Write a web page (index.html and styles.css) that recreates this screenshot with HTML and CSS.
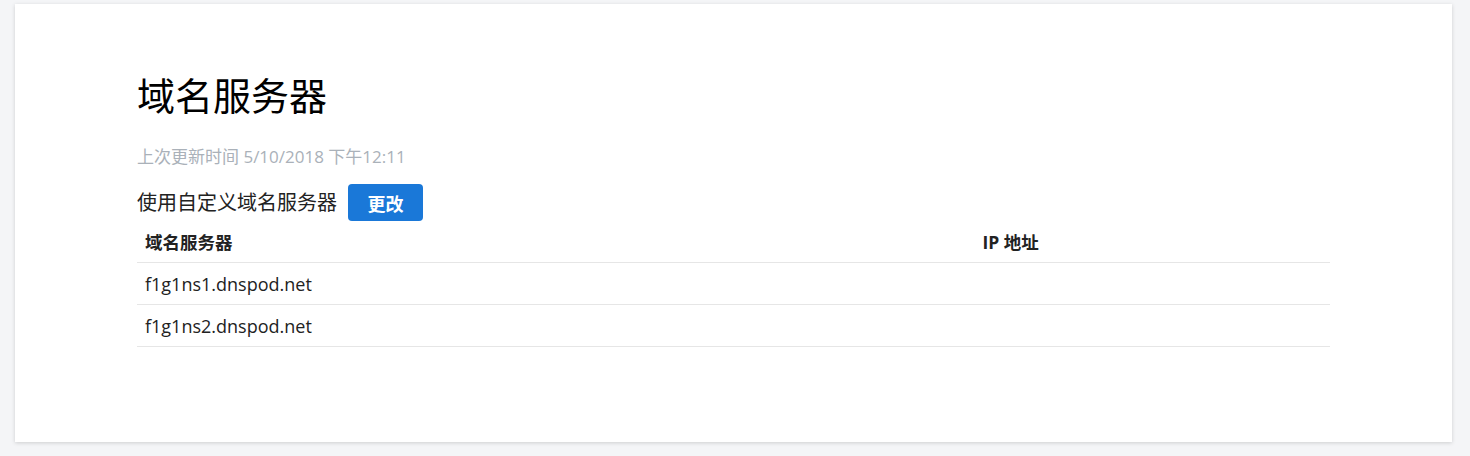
FILE: index.html
```html
<!DOCTYPE html>
<html lang="zh-CN">
<head>
<meta charset="utf-8">
<title>域名服务器</title>
<link rel="stylesheet" href="styles.css">
</head>
<body>
<main class="card">
  <h1 class="title">域名服务器</h1>
  <p class="updated">上次更新时间 5/10/2018 下午12:11</p>
  <div class="mode">
    <span class="mode-label">使用自定义域名服务器</span>
    <button class="btn" type="button">更改</button>
  </div>
  <table class="ns-table">
    <thead>
      <tr><th class="col-name">域名服务器</th><th>IP 地址</th></tr>
    </thead>
    <tbody>
      <tr><td>f1g1ns1.dnspod.net</td><td></td></tr>
      <tr><td>f1g1ns2.dnspod.net</td><td></td></tr>
    </tbody>
  </table>
</main>
</body>
</html>
```
FILE: styles.css
```css
html, body {
  margin: 0;
  padding: 0;
}
body {
  background: #f4f5f7;
  font-family: "Open Sans", "Noto Sans CJK SC", sans-serif;
  color: #222;
  padding: 4px 18px 14px 15px;
}
.card {
  background: #fff;
  box-shadow: 0 1px 4px rgba(0, 0, 0, 0.16);
  padding: 65px 122px 95px 122px;
  box-sizing: border-box;
  height: 438px;
}
.title {
  margin: 0;
  font-size: 38px;
  font-weight: 400;
  line-height: 52px;
  color: #000;
}
.updated {
  margin: 25px 0 0;
  font-size: 17px;
  line-height: 22px;
  color: #aab1b9;
}
.mode {
  display: flex;
  align-items: center;
  gap: 11px;
  margin-top: 16px;
}
.mode-label {
  font-size: 20px;
  line-height: 24px;
  color: #222;
}
.btn {
  font-family: inherit;
  background: #1a78d8;
  color: #fff;
  border: 0;
  border-radius: 4px;
  width: 75px;
  height: 37px;
  font-size: 18px;
  font-weight: 700;
  padding: 0;
}
.ns-table {
  width: 100%;
  border-collapse: collapse;
  margin-top: 0;
}
.ns-table th,
.ns-table td {
  text-align: left;
  padding: 0 8px;
  border-bottom: 1px solid #e6e6e6;
  height: 41px;
}
.ns-table th {
  font-size: 17.5px;
  font-weight: 700;
  color: #222;
}
.ns-table .col-name {
  width: 70.2%;
}
.ns-table td {
  font-size: 18px;
  color: #222;
}
```
